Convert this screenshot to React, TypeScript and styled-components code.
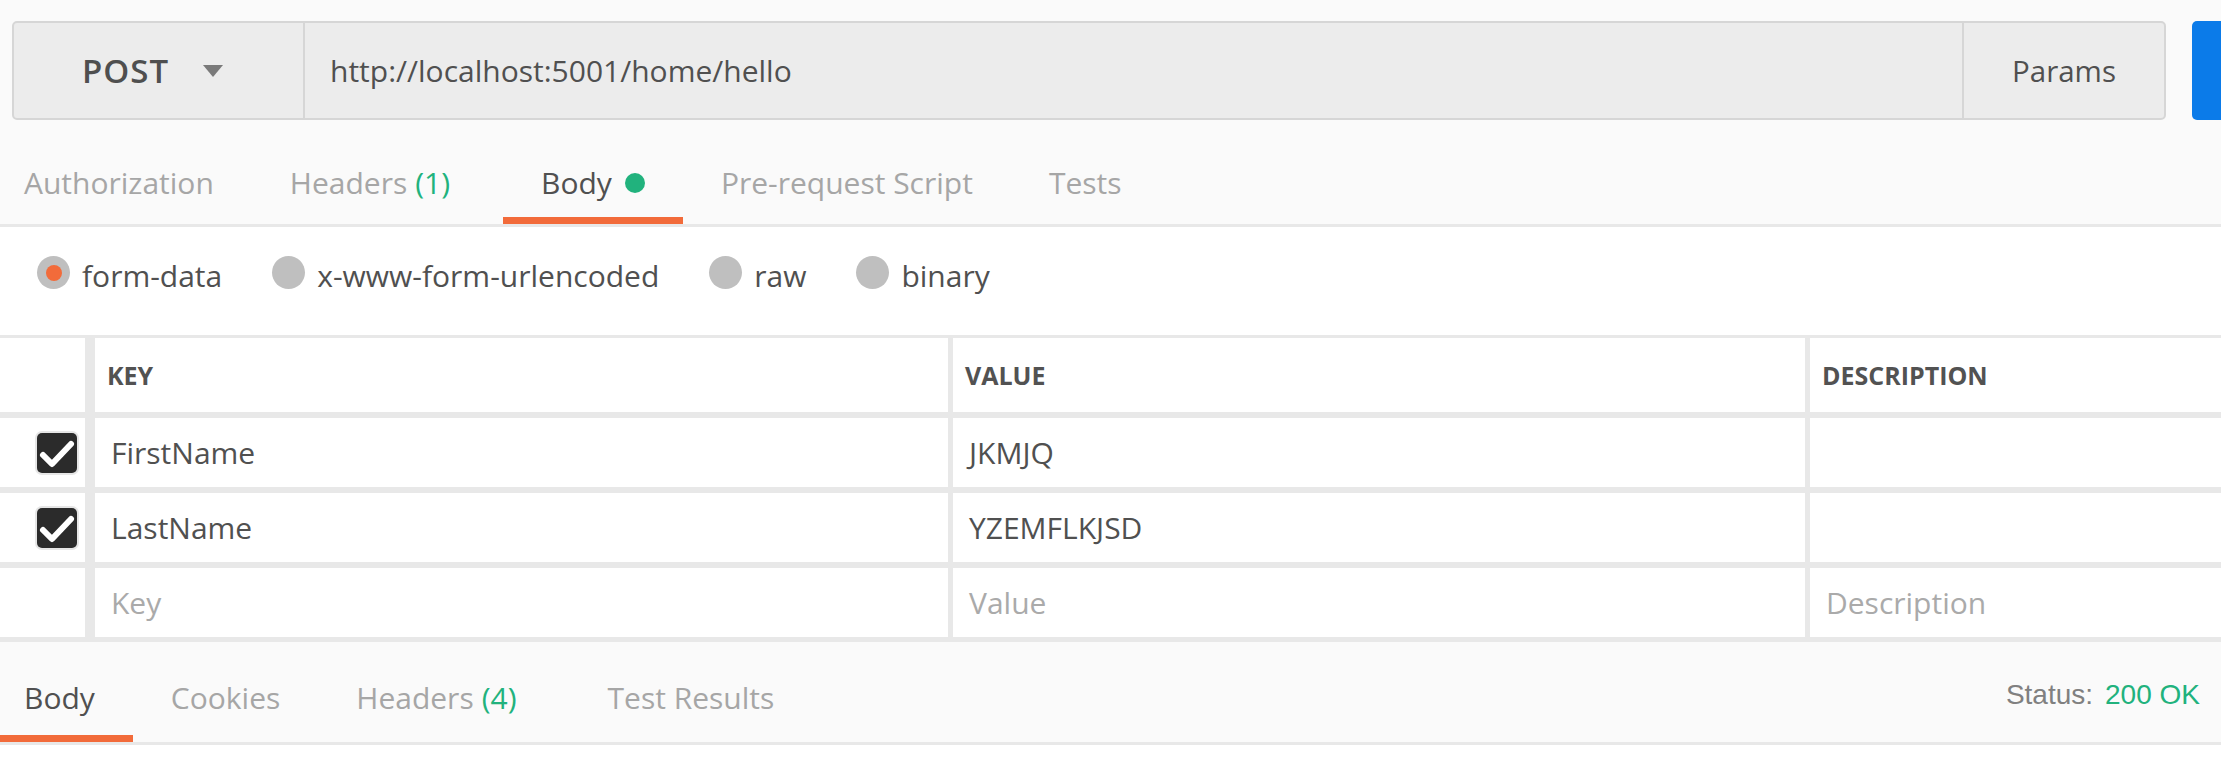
import styled, { createGlobalStyle } from 'styled-components';

const GlobalStyle = createGlobalStyle`
  html, body {
    margin: 0;
    padding: 0;
    background: #ffffff;
  }
  body {
    font-family: "Open Sans", "Liberation Sans", sans-serif;
    color: #505050;
    overflow: hidden;
  }
`;

const ORANGE = '#f26b3a';
const GREEN = '#21b27d';
const LINE = '#e8e8e8';

const Page = styled.div`
  width: 2221px;
  height: 761px;
  overflow: hidden;
  background: #ffffff;
  display: flex;
  flex-direction: column;
`;

const RequestHeader = styled.div`
  background: #fafafa;
`;

const UrlRow = styled.div`
  display: flex;
  gap: 26px;
  padding: 21px 0 0 12px;
  height: 99px;
  overflow: hidden;
`;

const UrlBar = styled.div`
  display: flex;
  flex-shrink: 0;
  width: 2154px;
  height: 99px;
  box-sizing: border-box;
  border: 2px solid #d6d6d6;
  border-radius: 5px;
  background: #ececec;
`;

const MethodSelect = styled.div`
  display: flex;
  align-items: center;
  width: 291px;
  box-sizing: border-box;
  padding-left: 68px;
  border-right: 2px solid #d6d6d6;
  font-size: 33px;
  font-weight: 600;
  letter-spacing: 1px;
  color: #4f4f4f;
`;

const Caret = styled.span`
  width: 0;
  height: 0;
  margin-left: 34px;
  border-left: 10px solid transparent;
  border-right: 10px solid transparent;
  border-top: 12px solid #7a7a7a;
`;

const UrlInput = styled.div`
  flex: 1;
  display: flex;
  align-items: center;
  padding-left: 25px;
  font-size: 30px;
  color: #505050;
`;

const ParamsButton = styled.div`
  display: flex;
  align-items: center;
  justify-content: center;
  width: 202px;
  box-sizing: border-box;
  border-left: 2px solid #d6d6d6;
  font-size: 29.5px;
  color: #505050;
`;

const SendButton = styled.div`
  flex-shrink: 0;
  width: 120px;
  height: 99px;
  border-radius: 5px;
  background: #0b7be9;
`;

const TabBar = styled.div<{ $height: number }>`
  display: flex;
  height: ${p => p.$height}px;
  background: #fafafa;
  border-bottom: 3px solid ${LINE};
`;

const Tab = styled.div<{ $active?: boolean; $pb: number }>`
  display: flex;
  align-items: flex-end;
  box-sizing: border-box;
  height: 100%;
  padding: 0 38px ${p => p.$pb}px;
  border-bottom: 7px solid ${p => (p.$active ? ORANGE : 'transparent')};
  font-size: 30px;
  line-height: 40px;
  color: ${p => (p.$active ? '#505050' : '#a6a6a6')};
  white-space: nowrap;

  &:first-child {
    padding-left: 24px;
  }
`;

const TabLabel = styled.span`
  display: inline-flex;
  align-items: center;
`;

const Count = styled.span`
  color: ${GREEN};
  margin-left: 8px;
  padding-right: 15px;
`;

const Dot = styled.span`
  width: 20px;
  height: 20px;
  margin-left: 13px;
  border-radius: 50%;
  background: ${GREEN};
`;

const BodyTypeRow = styled.div`
  display: flex;
  align-items: flex-start;
  gap: 50px;
  height: 108px;
  box-sizing: border-box;
  padding: 29px 0 0 37px;
  background: #ffffff;
`;

const RadioOption = styled.label`
  display: flex;
  align-items: flex-start;
  gap: 12px;
  font-size: 30px;
  line-height: 40px;
  color: #505050;
`;

const Radio = styled.span<{ $checked?: boolean }>`
  display: flex;
  align-items: center;
  justify-content: center;
  width: 33px;
  height: 33px;
  border-radius: 50%;
  background: #bfbfbf;

  &::after {
    content: '';
    display: ${p => (p.$checked ? 'block' : 'none')};
    width: 16px;
    height: 16px;
    border-radius: 50%;
    background: ${ORANGE};
  }
`;

const Table = styled.div`
  display: flex;
  flex-direction: column;
  gap: 6px;
  padding: 3px 0 5px;
  background: ${LINE};
`;

const TableRow = styled.div<{ $height: number }>`
  display: grid;
  grid-template-columns: 90px 853px 852px 1fr;
  column-gap: 5px;
  height: ${p => p.$height}px;
`;

const Cell = styled.div<{ $placeholder?: boolean }>`
  display: flex;
  align-items: center;
  padding-left: 16px;
  background: #ffffff;
  font-size: 30px;
  color: ${p => (p.$placeholder ? '#aaaaaa' : '#505050')};
`;

const HeadCell = styled(Cell)`
  padding-left: 12px;
  font-size: 25px;
  font-weight: 700;
  color: #525252;
`;

const CheckCell = styled.div`
  display: flex;
  align-items: center;
  box-sizing: border-box;
  padding-left: 37px;
  background: #ffffff;
  border-right: 5px solid ${LINE};
`;

const CheckBox = styled.span`
  display: flex;
  align-items: center;
  justify-content: center;
  width: 40px;
  height: 40px;
  border-radius: 5px;
  background: #2b2b2b;
  box-shadow: 0 0 0 2px #e6e6e6;
`;

const Status = styled.div`
  align-self: flex-start;
  padding: 37px 21px 0 0;
  font-family: "Liberation Sans", Arial, sans-serif;
  font-size: 28px;
  color: #808080;
  white-space: nowrap;
`;

const StatusValue = styled.span`
  color: ${GREEN};
  margin-left: 12px;
`;

const Spacer = styled.div`
  flex: 1;
`;

const Check = () => (
  <svg width="40" height="40" viewBox="0 0 40 40">
    <polyline
      points="6,22 15,31 34,11"
      fill="none"
      stroke="#ffffff"
      strokeWidth="6"
      strokeLinecap="round"
      strokeLinejoin="round"
    />
  </svg>
);

const rows = [
  { key: 'FirstName', value: 'JKMJQ' },
  { key: 'LastName', value: 'YZEMFLKJSD' },
];

export default function App() {
  return (
    <>
      <GlobalStyle />
      <Page>
        <RequestHeader>
          <UrlRow>
            <UrlBar>
              <MethodSelect>
                POST
                <Caret />
              </MethodSelect>
              <UrlInput>http://localhost:5001/home/hello</UrlInput>
              <ParamsButton>Params</ParamsButton>
            </UrlBar>
            <SendButton />
          </UrlRow>
          <TabBar $height={104}>
            <Tab $pb={14}>Authorization</Tab>
            <Tab $pb={14}>
              <TabLabel>
                Headers<Count>(1)</Count>
              </TabLabel>
            </Tab>
            <Tab $pb={14} $active>
              <TabLabel>
                Body<Dot />
              </TabLabel>
            </Tab>
            <Tab $pb={14}>Pre-request Script</Tab>
            <Tab $pb={14}>Tests</Tab>
          </TabBar>
        </RequestHeader>

        <BodyTypeRow>
          <RadioOption>
            <Radio $checked />
            form-data
          </RadioOption>
          <RadioOption>
            <Radio />
            x-www-form-urlencoded
          </RadioOption>
          <RadioOption>
            <Radio />
            raw
          </RadioOption>
          <RadioOption>
            <Radio />
            binary
          </RadioOption>
        </BodyTypeRow>

        <Table>
          <TableRow $height={74}>
            <CheckCell />
            <HeadCell>KEY</HeadCell>
            <HeadCell>VALUE</HeadCell>
            <HeadCell>DESCRIPTION</HeadCell>
          </TableRow>
          {rows.map(r => (
            <TableRow $height={69} key={r.key}>
              <CheckCell>
                <CheckBox>
                  <Check />
                </CheckBox>
              </CheckCell>
              <Cell>{r.key}</Cell>
              <Cell>{r.value}</Cell>
              <Cell />
            </TableRow>
          ))}
          <TableRow $height={69}>
            <CheckCell />
            <Cell $placeholder>Key</Cell>
            <Cell $placeholder>Value</Cell>
            <Cell $placeholder>Description</Cell>
          </TableRow>
        </Table>

        <TabBar $height={100}>
          <Tab $pb={17} $active>Body</Tab>
          <Tab $pb={17}>Cookies</Tab>
          <Tab $pb={17}>
            <TabLabel>
              Headers<Count>(4)</Count>
            </TabLabel>
          </Tab>
          <Tab $pb={17}>Test Results</Tab>
          <Spacer />
          <Status>
            Status:<StatusValue>200 OK</StatusValue>
          </Status>
        </TabBar>
      </Page>
    </>
  );
}
